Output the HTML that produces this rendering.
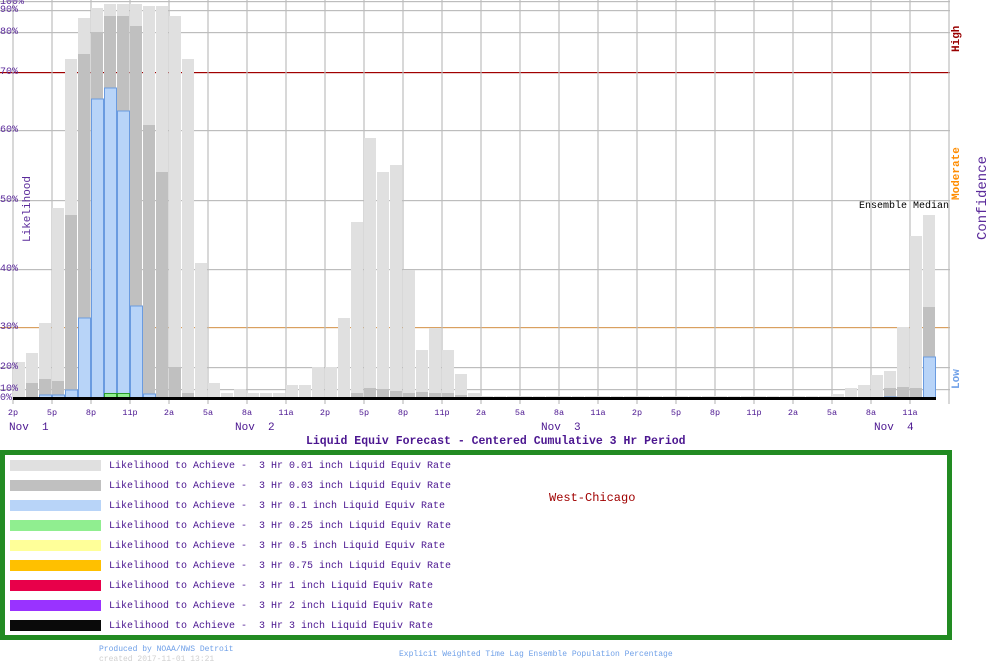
<!DOCTYPE html>
<html><head><meta charset="utf-8"><style>
body{margin:0;background:#fff;width:1000px;height:670px;overflow:hidden;position:relative;font-family:"Liberation Mono","DejaVu Sans Mono",monospace}
.a{position:absolute;white-space:pre}
.lg{position:absolute;left:109px;font-size:10px;color:#4b1690;white-space:pre}
.sw{position:absolute;left:10px;width:91px;height:11px}
</style></head><body>
<svg id="c" width="1000" height="450" style="position:absolute;left:0;top:0" xmlns="http://www.w3.org/2000/svg"></svg>
<div class="a" style="left:0;top:-3px;font-size:10px;color:#5a2a9a">100%</div>
<div class="a" style="left:0;top:5px;font-size:10px;color:#5a2a9a">90%</div>
<div class="a" style="left:0;top:27px;font-size:10px;color:#5a2a9a">80%</div>
<div class="a" style="left:0;top:67px;font-size:10px;color:#5a2a9a">70%</div>
<div class="a" style="left:0;top:125px;font-size:10px;color:#5a2a9a">60%</div>
<div class="a" style="left:0;top:195px;font-size:10px;color:#5a2a9a">50%</div>
<div class="a" style="left:0;top:264px;font-size:10px;color:#5a2a9a">40%</div>
<div class="a" style="left:0;top:322px;font-size:10px;color:#5a2a9a">30%</div>
<div class="a" style="left:0;top:362px;font-size:10px;color:#5a2a9a">20%</div>
<div class="a" style="left:0;top:384px;font-size:10px;color:#5a2a9a">10%</div>
<div class="a" style="left:0;top:393px;font-size:10px;color:#5a2a9a">0%</div>
<div class="a" style="left:-2px;top:206px;font-size:11px;color:#5a2a9a;transform:rotate(-90deg);transform-origin:30px 6px">Likelihood</div>
<div class="a" style="left:942px;top:31px;font-size:11px;font-weight:bold;color:#990000;transform:rotate(-90deg);transform-origin:15px 6px">High</div>
<div class="a" style="left:930px;top:167px;font-size:11px;font-weight:bold;color:#ff8c00;transform:rotate(-90deg);transform-origin:27px 6px">Moderate</div>
<div class="a" style="left:948px;top:374px;font-size:11px;font-weight:bold;color:#6fa0e8;transform:rotate(-90deg);transform-origin:9px 6px">Low</div>
<div class="a" style="left:943px;top:192px;font-size:14px;color:#5a2a9a;transform:rotate(-90deg);transform-origin:40px 8px">Confidence</div>
<div class="a" style="left:859px;top:201px;font-size:10px;color:#000">Ensemble Median</div>
<div id="ticks"></div>
<div class="a" style="left:9px;top:422px;font-size:11px;color:#4b1690">Nov  1</div>
<div class="a" style="left:235px;top:422px;font-size:11px;color:#4b1690">Nov  2</div>
<div class="a" style="left:541px;top:422px;font-size:11px;color:#4b1690">Nov  3</div>
<div class="a" style="left:874px;top:422px;font-size:11px;color:#4b1690">Nov  4</div>
<div class="a" style="left:306px;top:435px;font-size:11.5px;font-weight:bold;color:#4b1690">Liquid Equiv Forecast - Centered Cumulative 3 Hr Period</div>
<div style="position:absolute;left:0;top:450px;width:942px;height:180px;border:5px solid #228b22"></div>
<div class="sw" style="top:460px;background:#e0e0e0"></div><div class="lg" style="top:461px">Likelihood to Achieve -  3 Hr 0.01 inch Liquid Equiv Rate</div>
<div class="sw" style="top:480px;background:#c0c0c0"></div><div class="lg" style="top:481px">Likelihood to Achieve -  3 Hr 0.03 inch Liquid Equiv Rate</div>
<div class="sw" style="top:500px;background:#b8d4f8"></div><div class="lg" style="top:501px">Likelihood to Achieve -  3 Hr 0.1 inch Liquid Equiv Rate</div>
<div class="sw" style="top:520px;background:#90ee90"></div><div class="lg" style="top:521px">Likelihood to Achieve -  3 Hr 0.25 inch Liquid Equiv Rate</div>
<div class="sw" style="top:540px;background:#ffff99"></div><div class="lg" style="top:541px">Likelihood to Achieve -  3 Hr 0.5 inch Liquid Equiv Rate</div>
<div class="sw" style="top:560px;background:#ffc000"></div><div class="lg" style="top:561px">Likelihood to Achieve -  3 Hr 0.75 inch Liquid Equiv Rate</div>
<div class="sw" style="top:580px;background:#e8004a"></div><div class="lg" style="top:581px">Likelihood to Achieve -  3 Hr 1 inch Liquid Equiv Rate</div>
<div class="sw" style="top:600px;background:#9933ff"></div><div class="lg" style="top:601px">Likelihood to Achieve -  3 Hr 2 inch Liquid Equiv Rate</div>
<div class="sw" style="top:620px;background:#0a0a0a"></div><div class="lg" style="top:621px">Likelihood to Achieve -  3 Hr 3 inch Liquid Equiv Rate</div>
<div class="a" style="left:549px;top:491px;font-size:12px;color:#a00000">West-Chicago</div>
<div class="a" style="left:99px;top:645px;font-size:8px;color:#6fa0e8">Produced by NOAA/NWS Detroit</div>
<div class="a" style="left:99px;top:655px;font-size:8px;color:#d0d0d0">created 2017-11-01 13:21</div>
<div class="a" style="left:399px;top:650px;font-size:8px;color:#6fa0e8">Explicit Weighted Time Lag Ensemble Population Percentage</div>
<script>
var s='',G='#bdbdbd';
[1,10,32,72,130,200,269,327,367,389].forEach(function(y){s+='<rect x="0" y="'+y+'" width="950" height="1.2" fill="'+(y==72?'#a00000':y==327?'#d9a060':G)+'"/>';});
for(var k=0;k<=24;k++){var x=13+39*k;s+='<rect x="'+(x-0.6)+'" y="0" width="1.2" height="404" fill="'+G+'"/>';}
var L=[362,353,323,208,59,18,8,4,4,4,6,6,16,59,263,383,393,389,393,393,393,385,385,367,367,318,222,138,172,165,270,350,328,350,374,393,396];
while(L.length<63)L.push(396);L=L.concat([394,388,385,375,371,327,236,215,400]);
var D={1:383,2:379,3:381,4:215,5:54,6:32,7:16,8:16,9:26,10:125,11:172,12:367,13:393,26:393,27:388,28:389,29:391,30:393,31:392,32:393,33:393,34:395,67:388,68:387,69:388,70:307};
var B={2:395,3:395,4:390,5:318,6:99,7:88,8:111,9:306,10:394,67:397,70:357};
for(var i=0;i<72;i++){var x=13+13*i;
 if(L[i]<398)s+='<rect x="'+x+'" y="'+L[i]+'" width="12" height="'+(398-L[i])+'" fill="#e0e0e0"/>';
 if(D[i])s+='<rect x="'+x+'" y="'+D[i]+'" width="12" height="'+(398-D[i])+'" fill="#c0c0c0"/>';
 if(B[i])s+='<rect x="'+(x+0.5)+'" y="'+B[i]+'" width="12" height="'+(398-B[i])+'" fill="#b8d4f8" stroke="#6a9be0" stroke-width="1"/>';
 if(i==7||i==8)s+='<rect x="'+(x+0.5)+'" y="393.5" width="12" height="4" fill="#90ee90" stroke="#2a9a2a" stroke-width="1"/>';
}
s+='<rect x="13" y="397" width="923" height="3" fill="#000"/>';
document.getElementById('c').innerHTML=s;
var lb=['2p','5p','8p','11p','2a','5a','8a','11a'],t='';
for(var k=0;k<24;k++){var x=13+39*k;t+='<div class="a" style="left:'+(x-15)+'px;width:30px;text-align:center;top:408px;font-size:8.5px;color:#4b1690">'+lb[k%8]+'</div>';}
document.getElementById('ticks').innerHTML=t;
</script>
</body></html>
